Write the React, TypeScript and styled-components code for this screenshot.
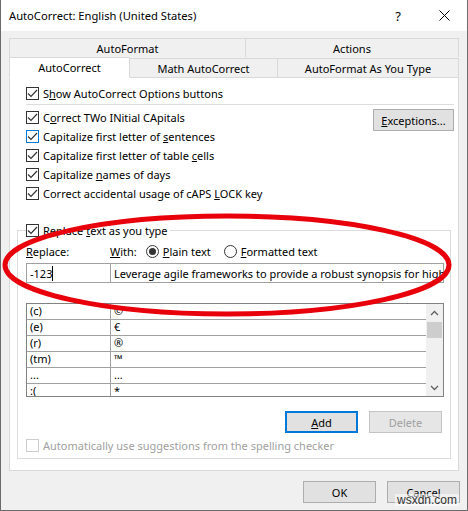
import styled, { createGlobalStyle } from "styled-components"

const Global = createGlobalStyle`
  html, body { margin: 0; padding: 0; background: #fff; }
  body { font-family: "Noto Sans", "Open Sans", sans-serif; font-size: 11px; color: #000; }
`

const Window = styled.div`
  position: relative;
  width: 466px;
  height: 510px;
  border: 1px solid #6b6b6b;
  border-top: none;
  background: #f0f0f0;
  overflow: hidden;
`

const TitleBar = styled.div`
  height: 31px;
  background: #fff;
  display: flex;
  align-items: center;
  padding-left: 8px;
`

const Title = styled.div`
  flex: 1;
  font-size: 11.2px;
`

const TitleBtn = styled.div`
  width: 46px;
  height: 31px;
  display: flex;
  align-items: center;
  justify-content: center;
  font-size: 13px;
`

const Body = styled.div`
  padding: 7px 0 0 8px;
`

const TabRow = styled.div<{ $low?: boolean }>`
  display: flex;
  height: ${(p) => (p.$low ? 20 : 19)}px;
  align-items: flex-end;
`

const Tab = styled.div<{ $w: number; $active?: boolean }>`
  width: ${(p) => p.$w}px;
  height: ${(p) => (p.$active ? 21 : 19)}px;
  box-sizing: border-box;
  display: flex;
  align-items: center;
  justify-content: center;
  background: ${(p) => (p.$active ? "#fff" : "#f0f0f0")};
  border: 1px solid #d9d9d9;
  border-bottom: ${(p) => (p.$active ? "1px solid #fff" : "none")};
  margin-right: -1px;
  position: relative;
  z-index: ${(p) => (p.$active ? 2 : 1)};
  margin-bottom: ${(p) => (p.$active ? "-1px" : "0")};
`

const Panel = styled.div`
  width: 450px;
  height: 394px;
  box-sizing: border-box;
  background: #fff;
  border: 1px solid #d9d9d9;
  padding: 0 6px 0 7px;
`

const CheckRow = styled.div<{ $disabled?: boolean; $indent?: boolean }>`
  display: flex;
  align-items: center;
  gap: 4px;
  height: 19px;
  margin-left: ${(p) => (p.$indent ? 9 : 0)}px;
  color: ${(p) => (p.$disabled ? "#a0a0a0" : "#000")};
  white-space: nowrap;
`

const Box = styled.div<{ $tone?: "focus" | "disabled" }>`
  width: 13px;
  height: 13px;
  box-sizing: border-box;
  border: 1px solid
    ${(p) => (p.$tone === "focus" ? "#0078d7" : p.$tone === "disabled" ? "#cccccc" : "#333")};
  background: #fff;
  flex: none;
  display: flex;
  align-items: center;
  justify-content: center;
`

const Separator = styled.div`
  height: 1px;
  background: #dcdcdc;
  margin: 1px -2px 0 9px;
`

const Options = styled.div`
  display: flex;
  justify-content: space-between;
  margin-top: 3px;
`

const Button = styled.button<{ $w?: number; $def?: boolean }>`
  width: ${(p) => p.$w ?? 73}px;
  height: 22px;
  box-sizing: border-box;
  font: inherit;
  color: #000;
  background: #e1e1e1;
  border: ${(p) => (p.$def ? "2px solid #0078d7" : "1px solid #adadad")};
  padding: 0;
  &:disabled {
    color: #a0a0a0;
    background: #e6e6e6;
    border-color: #c4c4c4;
  }
`

const GroupBox = styled.fieldset`
  margin: 18px 0 0 0;
  padding: 0 6px 3px 8px;
  border: 1px solid #dcdcdc;
  width: 434px;
  box-sizing: border-box;
`

const Legend = styled.legend`
  padding: 0 2px 0 0;
  margin-left: 0;
`

const Labels = styled.div`
  display: flex;
  align-items: center;
  height: 19px;
  margin-top: 2px;
`

const Label = styled.span<{ $w?: number }>`
  width: ${(p) => (p.$w ? `${p.$w}px` : "auto")};
  margin-right: ${(p) => (p.$w ? 0 : 9)}px;
`

const Radio = styled.label`
  display: flex;
  align-items: center;
  gap: 4px;
  margin-right: 13px;
`

const Circle = styled.span<{ $on?: boolean }>`
  width: 13px;
  height: 13px;
  box-sizing: border-box;
  border: 1px solid #333;
  border-radius: 50%;
  display: flex;
  align-items: center;
  justify-content: center;
  &::after {
    content: "";
    display: ${(p) => (p.$on ? "block" : "none")};
    width: 7px;
    height: 7px;
    border-radius: 50%;
    background: #333;
  }
`

const Inputs = styled.div`
  display: flex;
  margin-top: 2px;
`

const Input = styled.div<{ $w: number }>`
  width: ${(p) => p.$w}px;
  height: 20px;
  box-sizing: border-box;
  border: 1px solid #a0a0a0;
  margin-right: -1px;
  padding-left: 3px;
  display: flex;
  align-items: center;
  white-space: nowrap;
  overflow: hidden;
`

const Caret = styled.span`
  display: inline-block;
  width: 1px;
  height: 15px;
  background: #000;
`

const List = styled.div`
  margin-top: 20px;
  width: 418px;
  height: 94px;
  box-sizing: border-box;
  border: 1px solid #828282;
  display: flex;
  overflow: hidden;
`

const Rows = styled.div`
  flex: 1;
`

const Row = styled.div`
  display: flex;
  height: 15px;
  border-bottom: 1px solid #a0a0a0;
  line-height: 14px;
`

const Cell = styled.div<{ $w?: number }>`
  width: ${(p) => (p.$w ? `${p.$w}px` : "auto")};
  flex: ${(p) => (p.$w ? "none" : 1)};
  box-sizing: border-box;
  padding-left: 3px;
  border-right: ${(p) => (p.$w ? "1px solid #a0a0a0" : "none")};
`

const Scrollbar = styled.div`
  width: 17px;
  background: #f0f0f0;
  display: flex;
  flex-direction: column;
  align-items: center;
`

const Arrow = styled.div`
  height: 17px;
  display: flex;
  align-items: center;
  justify-content: center;
`

const Thumb = styled.div`
  width: 15px;
  height: 16px;
  background: #cdcdcd;
  margin-top: 1px;
`

const Track = styled.div`
  flex: 1;
`

const ButtonRow = styled.div<{ $pad?: number }>`
  display: flex;
  justify-content: flex-end;
  gap: 11px;
  padding-right: ${(p) => p.$pad ?? 0}px;
`

const Footer = styled(ButtonRow)`
  margin-top: 10px;
`

const Overlay = styled.svg`
  position: absolute;
  left: 0;
  top: 0;
  pointer-events: none;
`

const Watermark = styled.div`
  position: absolute;
  right: 8px;
  bottom: 4px;
  font-family: "Liberation Sans", sans-serif;
  font-size: 12px;
  line-height: 12px;
  color: #333;
  background: rgba(255, 255, 255, 0.55);
  padding: 0 2px;
`

const Tick = () => (
  <svg width="11" height="11" viewBox="0 0 11 11">
    <polyline points="1,5.5 4,8.5 10,2" fill="none" stroke="#333" strokeWidth="1.2" />
  </svg>
)

const Check = ({ on = true, tone }: { on?: boolean; tone?: "focus" | "disabled" }) => (
  <Box $tone={tone}>{on && <Tick />}</Box>
)

const Chevron = ({ up }: { up?: boolean }) => (
  <svg width="9" height="6" viewBox="0 0 9 6">
    <polyline
      points={up ? "1,5 4.5,1.5 8,5" : "1,1 4.5,4.5 8,1"}
      fill="none"
      stroke="#606060"
      strokeWidth="1.3"
    />
  </svg>
)

const entries = [
  ["(c)", "©"],
  ["(e)", "€"],
  ["(r)", "®"],
  ["(tm)", "™"],
  ["...", "…"],
  [":(", "*"],
]

export default function App() {
  return (
    <>
      <Global />
      <Window>
        <TitleBar>
          <Title>AutoCorrect: English (United States)</Title>
          <TitleBtn>?</TitleBtn>
          <TitleBtn>
            <svg width="11" height="11" viewBox="0 0 11 11">
              <path d="M0.5 0.5 L10.5 10.5 M10.5 0.5 L0.5 10.5" stroke="#000" strokeWidth="1" />
            </svg>
          </TitleBtn>
        </TitleBar>
        <Body>
          <TabRow>
            <Tab $w={237}>AutoFormat</Tab>
            <Tab $w={214}>Actions</Tab>
          </TabRow>
          <TabRow $low>
            <Tab $w={121} $active>AutoCorrect</Tab>
            <Tab $w={149}>Math AutoCorrect</Tab>
            <Tab $w={182}>AutoFormat As You Type</Tab>
          </TabRow>
          <Panel>
            <CheckRow $indent style={{ marginTop: 6 }}>
              <Check />
              <span>S<u>h</u>ow AutoCorrect Options buttons</span>
            </CheckRow>
            <Separator />
            <Options>
              <div>
                <CheckRow $indent>
                  <Check />
                  <span>C<u>o</u>rrect TWo INitial CApitals</span>
                </CheckRow>
                <CheckRow $indent>
                  <Check tone="focus" />
                  <span>Capitalize first letter of <u>s</u>entences</span>
                </CheckRow>
                <CheckRow $indent>
                  <Check />
                  <span>Capitalize first letter of table <u>c</u>ells</span>
                </CheckRow>
                <CheckRow $indent>
                  <Check />
                  <span>Capitalize <u>n</u>ames of days</span>
                </CheckRow>
                <CheckRow $indent>
                  <Check />
                  <span>Correct accidental usage of cAPS <u>L</u>OCK key</span>
                </CheckRow>
              </div>
              <Button $w={81} style={{ marginTop: 1, marginRight: -2 }}>
                <u>E</u>xceptions...
              </Button>
            </Options>
            <GroupBox>
              <Legend>
                <CheckRow>
                  <Check />
                  <span>Replace <u>t</u>ext as you type</span>
                </CheckRow>
              </Legend>
              <Labels>
                <Label $w={84}>
                  <u>R</u>eplace:
                </Label>
                <Label>
                  <u>W</u>ith:
                </Label>
                <Radio>
                  <Circle $on />
                  <span><u>P</u>lain text</span>
                </Radio>
                <Radio>
                  <Circle />
                  <span><u>F</u>ormatted text</span>
                </Radio>
              </Labels>
              <Inputs>
                <Input $w={85}>
                  -123<Caret />
                </Input>
                <Input $w={334}>Leverage agile frameworks to provide a robust synopsis for high level overviews.</Input>
              </Inputs>
              <List>
                <Rows>
                  {entries.map(([k, v]) => (
                    <Row key={k}>
                      <Cell $w={84}>{k}</Cell>
                      <Cell>{v}</Cell>
                    </Row>
                  ))}
                </Rows>
                <Scrollbar>
                  <Arrow>
                    <Chevron up />
                  </Arrow>
                  <Thumb />
                  <Track />
                  <Arrow>
                    <Chevron />
                  </Arrow>
                </Scrollbar>
              </List>
              <ButtonRow $pad={2} style={{ marginTop: 14 }}>
                <Button $def>
                  <u>A</u>dd
                </Button>
                <Button disabled>Delete</Button>
              </ButtonRow>
              <CheckRow $disabled style={{ marginTop: 3 }}>
                <Check on={false} tone="disabled" />
                <span>Automatically use suggestions from the spelling checker</span>
              </CheckRow>
            </GroupBox>
          </Panel>
          <Footer $pad={7}>
            <Button>OK</Button>
            <Button>Cancel</Button>
          </Footer>
        </Body>
        <Overlay width="468" height="511">
          <ellipse cx="226" cy="265" rx="222" ry="49" fill="none" stroke="#e8000b" strokeWidth="5" />
        </Overlay>
        <Watermark>wsxdn.com</Watermark>
      </Window>
    </>
  )
}
